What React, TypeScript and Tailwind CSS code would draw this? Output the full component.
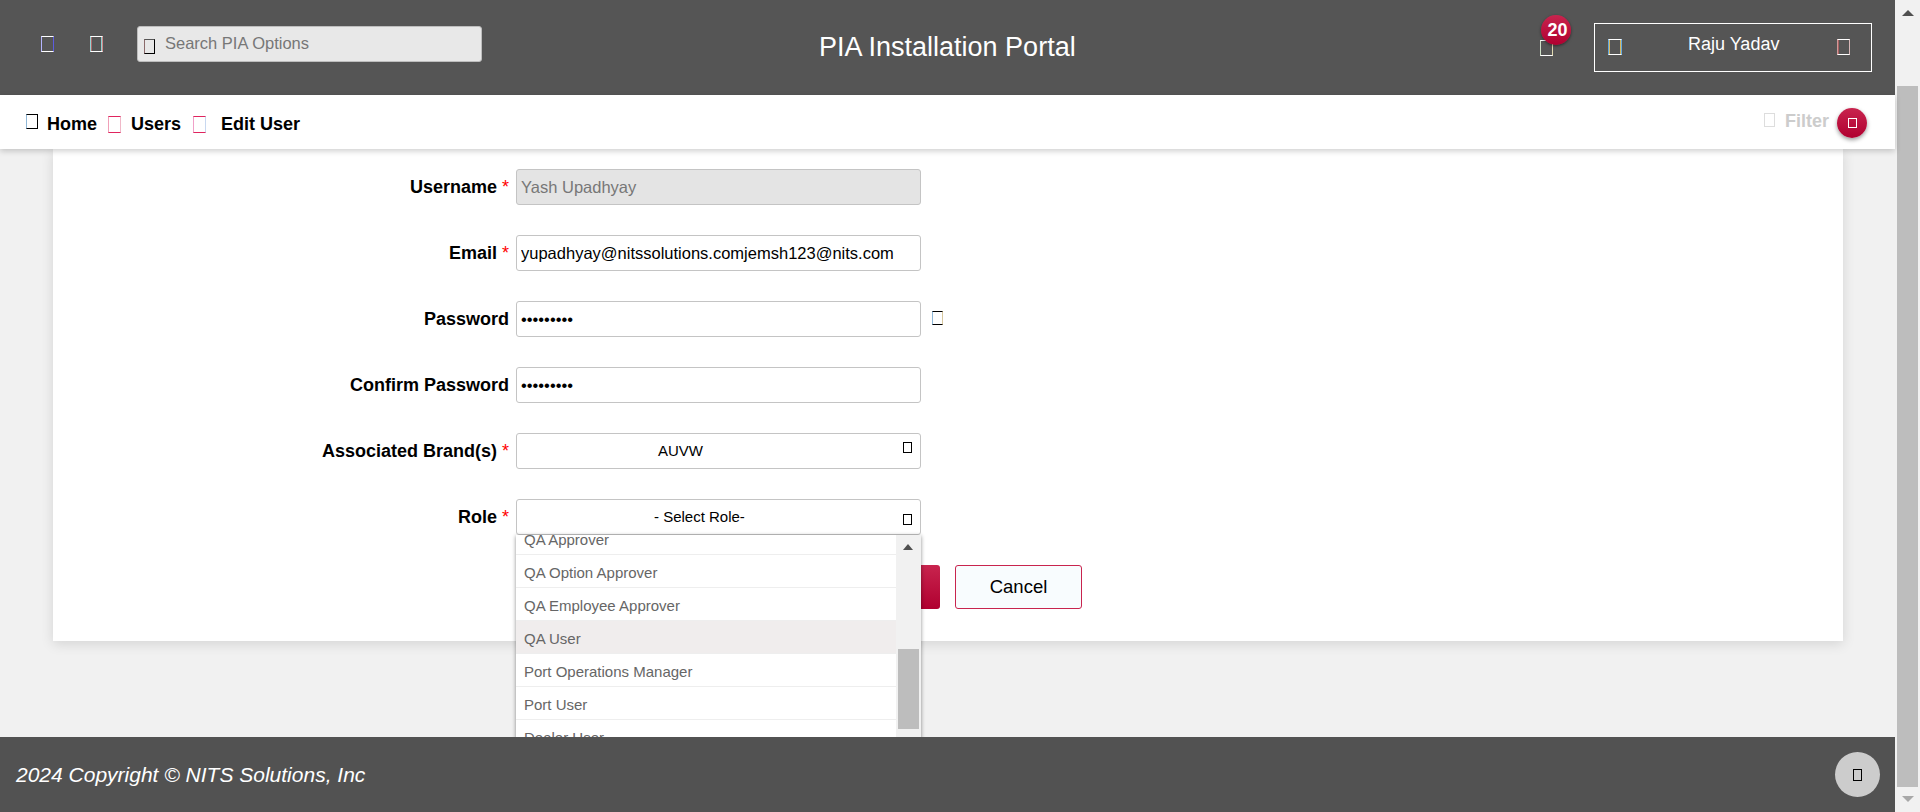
import React from "react";

function Box({ className }: { className: string }) {
  return <span className={"inline-block shrink-0 border " + className} />;
}

function Row({ label, req, children }: { label: string; req?: boolean; children: React.ReactNode }) {
  return (
    <div className="flex h-[36px] items-center">
      <label className="w-[456px] text-right text-[18px] font-bold text-black">
        {label}
        {req ? <span className="font-normal text-[#ff0000]"> *</span> : null}
      </label>
      <div className="ml-[7px] flex items-center">{children}</div>
    </div>
  );
}

const inputCls =
  "h-[36px] w-[405px] rounded-[3px] border border-[#c4c4c4] px-[4px] text-[16.5px] text-black outline-none";

export default function App() {
  const options = ["QA Approver", "QA Option Approver", "QA Employee Approver", "QA User", "Port Operations Manager", "Port User", "Dealer User"];
  return (
    <div className="flex h-[812px] w-full overflow-hidden bg-[#f1f1f1] font-['Liberation_Sans',Arial,sans-serif]">
      <div className="flex h-full w-[1895px] flex-col">
        <header className="flex h-[95px] shrink-0 items-start bg-[#555555] text-white">
          <Box className="ml-[41px] mt-[36px] h-[16px] w-[13px] border-white border-l-[#b4b4ff] border-r-[#5c5ce0]" />
          <Box className="ml-[36px] mt-[36px] h-[16px] w-[13px] border-white border-l-[#96d2d2] border-r-[#d28a8a] shadow-[inset_1px_0_#b06a6a,inset_-1px_0_#8fd0d0]" />
          <div className="ml-[34px] mt-[26px] flex h-[36px] w-[345px] items-center rounded-[3px] border border-[#bdbdbd] bg-[#e8e8e8]">
            <Box className="ml-[6px] mt-[4px] h-[15px] w-[11px] border-black border-l-[#8a6a6a] border-t-[#555555]" />
            <span className="ml-[10px] pb-[2px] text-[16.5px] text-[#777777]">Search PIA Options</span>
          </div>
          <h1 className="ml-[337px] mt-[29px] w-[256px] whitespace-nowrap text-center text-[27px] leading-[36px] font-normal">PIA Installation Portal</h1>
          <div className="relative ml-[465px] mt-[39px] h-[16px] w-[13px]">
            <Box className="h-[16px] w-[13px] border-white border-l-[#cfe0c8] border-r-[#e0d8b0]" />
            <span className="absolute left-[1px] top-[-24px] flex h-[30px] w-[30px] items-center justify-center rounded-full bg-[linear-gradient(#c8244e,#b00030)] pl-[3px] pt-[1px] text-[18px] font-bold text-white shadow-[0_1px_3px_rgba(0,0,0,0.5)]">20</span>
          </div>
          <div className="ml-[41px] mt-[23px] flex h-[49px] w-[278px] items-start border border-white">
            <Box className="ml-[13px] mt-[15px] h-[16px] w-[14px] border-white border-l-[#62a8e0] border-r-[#62a8e0] shadow-[inset_1px_0_#d8b860,inset_-1px_0_#d8b860]" />
            <span className="ml-[66px] mt-[10px] w-[91px] whitespace-nowrap text-[18px] leading-[20px]">Raju Yadav</span>
            <Box className="ml-[58px] mt-[15px] h-[16px] w-[13px] border-white border-l-[#d09a9a] border-r-[#d8b8b8] shadow-[inset_1px_0_#a86060]" />
          </div>
        </header>

        <nav className="relative z-10 flex h-[54px] shrink-0 items-center bg-white pt-[4px] text-[18px] font-bold text-black shadow-[0_2px_6px_rgba(0,0,0,0.2)]">
          <Box className="ml-[26px] mb-[5px] h-[15px] w-[12px] border-black border-l-[#8fb8d8]" />
          <span className="ml-[9px]">Home</span>
          <Box className="ml-[11px] h-[17px] w-[13px] border-[#e0245e] border-l-[#f0a0b8] border-r-[#f0b8c8]" />
          <span className="ml-[10px]">Users</span>
          <Box className="ml-[12px] h-[17px] w-[13px] border-[#e0245e] border-l-[#f0a0c8] border-r-[#c8d8f0]" />
          <span className="ml-[15px]">Edit User</span>
          <Box className="ml-auto mb-[8px] h-[14px] w-[11px] border-[#dddddd]" />
          <span className="ml-[10px] mb-[6px] text-[#cccccc]">Filter</span>
          <span className="ml-[8px] mr-[28px] mb-[2px] flex h-[30px] w-[30px] items-center justify-center rounded-full bg-[linear-gradient(#c8244e,#b00030)] shadow-[0_2px_4px_rgba(0,0,0,0.4)]">
            <Box className="h-[10px] w-[9px] border-white" />
          </span>
        </nav>

        <main className="min-h-0 flex-1 overflow-hidden">
          <div className="relative ml-[53px] flex h-[492px] w-[1790px] flex-col gap-[30px] bg-white pt-[20px] shadow-[0_3px_12px_rgba(0,0,0,0.12)]">
            <Row label="Username" req>
              <input readOnly value="Yash Upadhyay" className={inputCls + " bg-[#e4e4e4] !text-[#777777]"} />
            </Row>
            <Row label="Email" req>
              <input readOnly value="yupadhyay@nitssolutions.comjemsh123@nits.com" className={inputCls} />
            </Row>
            <Row label="Password">
              <input readOnly type="password" value="123456789" className={inputCls} />
              <Box className="ml-[11px] mb-[3px] h-[14px] w-[11px] border-black border-l-[#8fb8d8] border-r-[#d8c8a0]" />
            </Row>
            <Row label="Confirm Password">
              <input readOnly type="password" value="123456789" className={inputCls} />
            </Row>
            <Row label="Associated Brand(s)" req>
              <div className="flex h-[36px] w-[405px] items-start rounded-[3px] border border-[#c4c4c4] text-black">
                <span className="ml-[141px] mt-[6px] w-[245px] text-[15px]">AUVW</span>
                <Box className="mt-[8px] h-[11px] w-[9px] border-black" />
              </div>
            </Row>
            <div className="relative">
              <Row label="Role" req>
                <div className="flex h-[36px] w-[405px] items-start rounded-[3px] border border-[#c4c4c4] text-black">
                  <span className="ml-[137px] mt-[6px] w-[249px] text-[15px] whitespace-nowrap">- Select Role-</span>
                  <Box className="mt-[14px] h-[11px] w-[9px] border-black" />
                </div>
              </Row>
              <div className="absolute left-[463px] top-[36px] z-20 flex h-[220px] w-[405px] overflow-hidden bg-white shadow-[0_1px_4px_rgba(0,0,0,0.45)]">
                <ul className="w-[380px] text-[15px] text-[#666666]">
                  {options.map((o, i) => (
                    <li
                      key={o}
                      className={
                        "flex h-[33px] items-center border-b border-[#eeeeee] px-[8px] pt-[5px] " +
                        (i === 0 ? "-mt-[13px] " : "") +
                        (o === "QA User" ? "bg-[#f0eded]" : "")
                      }
                    >
                      {o}
                    </li>
                  ))}
                </ul>
                <div className="relative w-[25px] bg-[#f1f1f1]">
                  <span className="absolute left-[7px] top-[9px] h-0 w-0 border-x-[5px] border-b-[6px] border-x-transparent border-b-[#505050]" />
                  <span className="absolute left-[2px] top-[114px] h-[80px] w-[21px] bg-[#bdbdbd]" />
                </div>
              </div>
            </div>
            <div className="flex gap-[15px] pl-[761px]">
              <button className="h-[44px] w-[126px] rounded-[3px] bg-[linear-gradient(#c8244e,#b00030)] text-[16px] text-white">Save</button>
              <button className="h-[44px] w-[127px] rounded-[3px] border border-[#c8244e] bg-[#f8fcfe] text-[18.5px] text-black">Cancel</button>
            </div>
          </div>
        </main>

        <footer className="relative z-30 flex h-[75px] shrink-0 items-center justify-between bg-[#525252] pl-[16px] pr-[15px]">
          <span className="text-[21px] italic text-white">2024 Copyright © NITS Solutions, Inc</span>
          <span className="flex h-[45px] w-[45px] items-center justify-center rounded-full bg-[#cccccc]">
            <Box className="h-[12px] w-[9px] border-black" />
          </span>
        </footer>
      </div>

      <div className="relative h-full w-[25px] bg-[#f1f1f1]">
        <span className="absolute left-[7px] top-[10px] h-0 w-0 border-x-[6px] border-b-[6px] border-x-transparent border-b-[#505050]" />
        <span className="absolute left-[2px] top-[86px] h-[701px] w-[21px] bg-[#bdbdbd]" />
        <span className="absolute left-[7px] top-[796px] h-0 w-0 border-x-[6px] border-t-[6px] border-x-transparent border-t-[#a8a8a8]" />
      </div>
    </div>
  );
}
